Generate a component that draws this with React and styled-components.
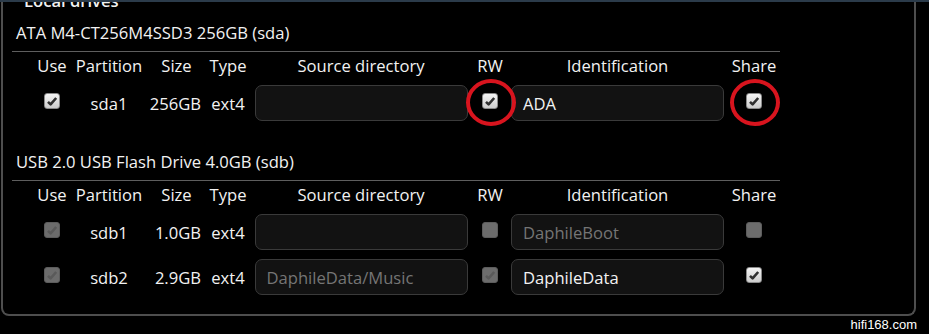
import styled, { createGlobalStyle } from 'styled-components';

const GlobalStyle = createGlobalStyle`
  html, body {
    margin: 0;
    padding: 0;
    background: #000;
    overflow: hidden;
  }
  body {
    font-family: 'Open Sans', 'DejaVu Sans', sans-serif;
    color: #f2f2f2;
  }
`;

const drives = [
  {
    title: 'ATA M4-CT256M4SSD3 256GB (sda)',
    parts: [
      {
        name: 'sda1',
        size: '256GB',
        type: 'ext4',
        source: '',
        ident: 'ADA',
        use: { checked: true },
        rw: { checked: true, circled: true },
        share: { checked: true, circled: true },
      },
    ],
  },
  {
    title: 'USB 2.0 USB Flash Drive 4.0GB (sdb)',
    parts: [
      {
        name: 'sdb1',
        size: '1.0GB',
        type: 'ext4',
        source: '',
        ident: 'DaphileBoot',
        identFaded: true,
        use: { checked: true, disabled: true },
        rw: { checked: false, disabled: true },
        share: { checked: false, disabled: true },
      },
      {
        name: 'sdb2',
        size: '2.9GB',
        type: 'ext4',
        source: 'DaphileData/Music',
        sourceFaded: true,
        ident: 'DaphileData',
        use: { checked: true, disabled: true },
        rw: { checked: true, disabled: true },
        share: { checked: true },
      },
    ],
  },
];

const headers = ['Use', 'Partition', 'Size', 'Type', 'Source directory', 'RW', 'Identification', 'Share'];

function Check({ checked, disabled, circled }) {
  return (
    <CheckCell>
      <Box $disabled={disabled}>
        {checked && (
          <svg width="12" height="11" viewBox="0 0 12 11">
            <path
              d="M2 5.8 L4.6 8.4 L10.2 2"
              fill="none"
              stroke={disabled ? '#5a5a5a' : '#303030'}
              strokeWidth="2.6"
              strokeLinejoin="round"
            />
          </svg>
        )}
      </Box>
      {circled && <Ring />}
    </CheckCell>
  );
}

export default function App() {
  return (
    <>
      <GlobalStyle />
      <TopStrip />
      <Panel>
        <Legend>Local drives</Legend>
        {drives.map((drive) => (
          <Drive key={drive.title}>
            <DriveTitle>{drive.title}</DriveTitle>
            <Table>
              {headers.map((h) => (
                <Th key={h}>{h}</Th>
              ))}
              {drive.parts.map((p) => (
                <Row key={p.name}>
                  <Check {...p.use} />
                  <Td>{p.name}</Td>
                  <Td $right>{p.size}</Td>
                  <Td>{p.type}</Td>
                  <InputCell>
                    <Field $faded={p.sourceFaded}>{p.source}</Field>
                  </InputCell>
                  <Check {...p.rw} />
                  <InputCell>
                    <Field $faded={p.identFaded}>{p.ident}</Field>
                  </InputCell>
                  <Check {...p.share} />
                </Row>
              ))}
            </Table>
          </Drive>
        ))}
      </Panel>
      <Footer>
        <Watermark>hifi168.com</Watermark>
      </Footer>
    </>
  );
}

const TopStrip = styled.div`
  position: relative;
  z-index: 1;
  height: 2px;
  background: #2b3b4a;
`;

const Panel = styled.div`
  width: 902px;
  margin-left: 1px;
  padding: 0 0 19px 9px;
  border: 2px solid #4e4e4e;
  border-top: none;
  border-radius: 0 0 8px 8px;
  overflow: hidden;
`;

const Legend = styled.div`
  margin: -11px 0 0 12px;
  font-size: 16.6px;
  font-weight: 600;
  line-height: 20px;
`;

const Drive = styled.section`
  width: 768px;
  margin-top: 12px;

  & + & {
    margin-top: 31px;
  }
`;

const DriveTitle = styled.div`
  padding: 0 0 8px 4px;
  border-bottom: 1px solid #5e5e5e;
  font-size: 16.6px;
  line-height: 20px;
`;

const Table = styled.div`
  display: grid;
  grid-template-columns: 36px 78px 57px 46px 220px 38px 217px 56px;
  row-gap: 9px;
  margin: 4px 0 0 22px;
  width: 748px;
`;

const Th = styled.div`
  font-size: 16.6px;
  line-height: 20px;
  text-align: center;
  white-space: nowrap;
`;

const Row = styled.div`
  display: contents;
`;

const Td = styled.div`
  display: flex;
  align-items: center;
  justify-content: ${(p) => (p.$right ? 'flex-end' : 'center')};
  padding-right: ${(p) => (p.$right ? '4px' : '0')};
  height: 36px;
  font-size: 16.6px;
  white-space: nowrap;
`;

const CheckCell = styled.div`
  position: relative;
  display: flex;
  align-items: center;
  justify-content: center;
  height: 36px;
`;

const Box = styled.span`
  display: flex;
  align-items: center;
  justify-content: center;
  width: 14px;
  height: 14px;
  margin-top: -4px;
  border-radius: 3px;
  border: 1px solid ${(p) => (p.$disabled ? '#5c5c5c' : '#8a8a8a')};
  background: ${(p) =>
    p.$disabled ? '#6c6c6c' : 'linear-gradient(#f4f4f4, #cdcdcd)'};
`;

const Ring = styled.span`
  position: absolute;
  left: 50%;
  top: 50%;
  width: 42px;
  height: 39px;
  margin: -24px 0 0 -24px;
  border: 4px solid #d8141e;
  border-radius: 50%;
`;

const InputCell = styled.div`
  display: flex;
  align-items: center;
  justify-content: center;
`;

const Field = styled.div`
  box-sizing: border-box;
  display: flex;
  align-items: center;
  width: 213px;
  height: 36px;
  padding-left: 11px;
  border: 1px solid #3a3a3a;
  border-radius: 7px;
  background: #121212;
  color: ${(p) => (p.$faded ? '#757575' : '#f2f2f2')};
  font-size: 16.6px;
`;

const Footer = styled.div`
  display: flex;
  justify-content: flex-end;
  padding: 2px 12px 0 0;
`;

const Watermark = styled.div`
  font-family: 'Liberation Sans', sans-serif;
  font-size: 13px;
  line-height: 14px;
  color: #fff;
  text-shadow: 0 0 1px #000, 0 0 2px #000;
`;
